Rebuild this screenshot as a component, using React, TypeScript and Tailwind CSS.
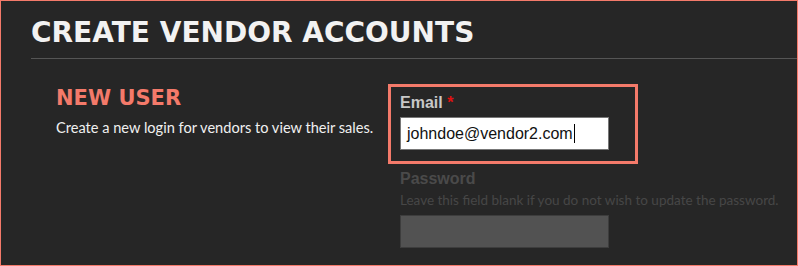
export default function App() {
  return (
    <div className="w-[798px] h-[266px] overflow-hidden border border-[#f47a6a] bg-[#262626]">
      {/* Page heading */}
      <div className="ml-[30px] border-b border-[#555555] pt-[14px] pb-[8px]">
        <h1 className="text-[28px] leading-[35px] font-bold text-[#f2f2f2] font-['DejaVu_Sans',sans-serif]">
          CREATE VENDOR ACCOUNTS
        </h1>
      </div>

      <div className="flex">
        {/* Section intro */}
        <div className="w-[387px] pl-[55px] pt-[26px]">
          <h2 className="text-[21px] leading-[26px] font-bold text-[#f47a6a] font-['DejaVu_Sans',sans-serif]">
            NEW USER
          </h2>
          <p className="mt-[7px] whitespace-nowrap text-[14.6px] leading-[20px] text-[#f0f0f0] font-['Lato',sans-serif]">
            Create a new login for vendors to view their sales.
          </p>
        </div>

        {/* Form fields */}
        <div className="pt-[25px]">
          <div className="w-[250px] border-[3px] border-[#f47a6a] pl-[9px] pt-[6px] pb-[11px]">
            <label className="block text-[16px] leading-[20px] font-bold text-[#c8c8c8] font-['Liberation_Sans',Arial,sans-serif]">
              Email <span className="text-[#e01010]">*</span>
            </label>
            <div className="mt-[4px] flex h-[33px] w-[209px] items-center border border-[#777777] bg-white px-[6px] font-['Liberation_Sans',Arial,sans-serif] text-[16px] text-[#111111]">
              johndoe@vendor2.com
              <span className="ml-[1px] inline-block h-[19px] w-px bg-black" />
            </div>
          </div>

          <div className="pl-[12px] pt-[5px]">
            <label className="block text-[16px] leading-[20px] font-bold text-[#4a4a4a] font-['Liberation_Sans',Arial,sans-serif]">
              Password
            </label>
            <p className="mt-[1px] whitespace-nowrap text-[13.5px] leading-[20px] text-[#474747] font-['Lato',sans-serif]">
              Leave this field blank if you do not wish to update the password.
            </p>
            <div className="mt-[5px] h-[33px] w-[209px] border border-[#3d3d3d] bg-[#525252]" />
          </div>
        </div>
      </div>
    </div>
  );
}
